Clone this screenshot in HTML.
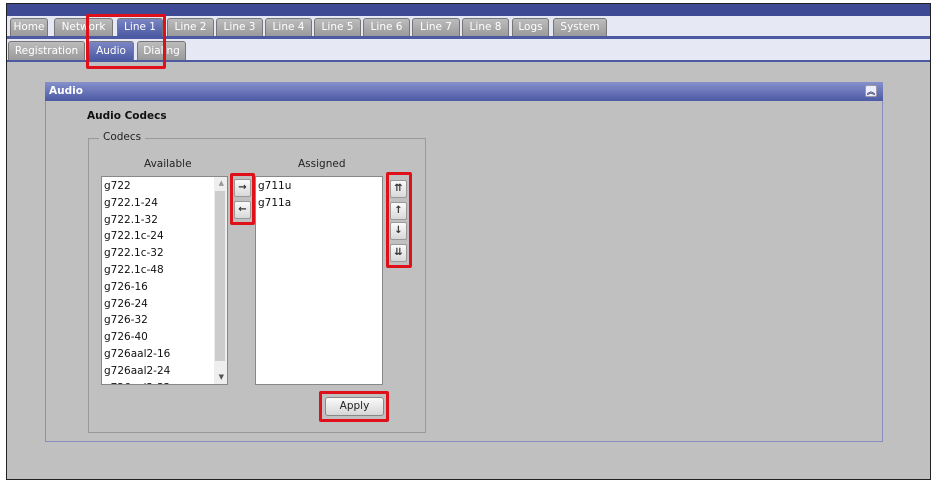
<!DOCTYPE html><html><head><style>
body{margin:0;width:937px;height:484px;background:#fff;font-family:"DejaVu Sans","Liberation Sans",sans-serif;font-size:10px;position:relative;overflow:hidden}
.a{position:absolute}
.tab{position:absolute;top:18px;height:18px;background:linear-gradient(#bcbcbc,#9a9a9a);border:1px solid #777;border-bottom:none;border-radius:3px 3px 0 0;color:#fff;line-height:17px;text-align:center;font-size:10.5px;box-sizing:border-box}
.st{position:absolute;top:41px;height:19px;background:linear-gradient(#bcbcbc,#9a9a9a);border:1px solid #777;border-bottom:none;border-radius:3px 3px 0 0;color:#fff;line-height:19px;text-align:center;font-size:10.5px;box-sizing:border-box}
.sel{background:linear-gradient(#7b86c4,#4c5aa4)}
.red{position:absolute;border:3px solid #e0101a;border-radius:2px;box-sizing:border-box}
.btn{position:absolute;width:17px;height:18px;background:linear-gradient(#fafafa,#d8d8d8);border:1px solid #999;border-radius:2px;box-sizing:border-box;font-size:10px;font-weight:bold;line-height:16px;text-align:center;color:#333}
.list{position:absolute;background:#fff;border:1px solid #888;box-sizing:border-box;overflow:hidden}
.list div{height:16.8px;line-height:16.8px;padding-left:2px;font-size:10.5px;color:#111}
</style></head><body>
<div class="a" style="left:6px;top:3px;width:925px;height:477px;border:1px solid #222;background:#c0c0c0;box-sizing:border-box"></div>
<div class="a" style="left:7px;top:4px;width:923px;height:12px;background:#3e4a94"></div>
<div class="a" style="left:7px;top:16px;width:923px;height:20px;background:#e6e8f4"></div>
<div class="a" style="left:7px;top:36px;width:923px;height:3px;background:#4c5aa4"></div>
<div class="a" style="left:7px;top:39px;width:923px;height:21px;background:#e6e8f4"></div>
<div class="a" style="left:7px;top:60px;width:923px;height:2px;background:#4c5aa4"></div>
<div class="tab" style="left:10px;width:38px">Home</div>
<div class="tab" style="left:54px;width:59px">Network</div>
<div class="tab sel" style="left:117px;width:46px">Line 1</div>
<div class="tab" style="left:167px;width:47px">Line 2</div>
<div class="tab" style="left:216px;width:47px">Line 3</div>
<div class="tab" style="left:265px;width:47px">Line 4</div>
<div class="tab" style="left:314px;width:47px">Line 5</div>
<div class="tab" style="left:363px;width:47px">Line 6</div>
<div class="tab" style="left:412px;width:48px">Line 7</div>
<div class="tab" style="left:462px;width:47px">Line 8</div>
<div class="tab" style="left:512px;width:37px">Logs</div>
<div class="tab" style="left:553px;width:54px">System</div>
<div class="st" style="left:8px;width:77px">Registration</div>
<div class="st sel" style="left:88px;width:46px">Audio</div>
<div class="st" style="left:137px;width:49px">Dialing</div>
<div class="red" style="left:86px;top:14px;width:80px;height:55px"></div>
<div class="a" style="left:45px;top:82px;width:838px;height:360px;border:1px solid #8890c0;box-sizing:border-box"></div>
<div class="a" style="left:45px;top:82px;width:838px;height:19px;background:linear-gradient(#8590cc,#4c5aa4);color:#fff;font-weight:bold;font-size:10.5px;line-height:19px;padding-left:4px;box-sizing:border-box">Audio</div>
<div class="a" style="left:865px;top:85px;width:12px;height:12px;background:#eef;border:1px solid #99a;border-radius:2px;box-sizing:border-box;font-size:8px;line-height:11px;text-align:center;color:#336;font-weight:bold">︽</div>
<div class="a" style="left:87px;top:110px;font-weight:bold;font-size:10.5px;color:#111">Audio Codecs</div>
<div class="a" style="left:88px;top:138px;width:338px;height:295px;border:1px solid #999;box-sizing:border-box"></div>
<div class="a" style="left:99px;top:131px;background:#c0c0c0;padding:0 4px;font-size:10.5px;color:#222">Codecs</div>
<div class="a" style="left:144px;top:158px;font-size:10.5px;color:#222">Available</div>
<div class="a" style="left:298px;top:158px;font-size:10.5px;color:#222">Assigned</div>
<div class="list" style="left:101px;top:176px;width:127px;height:209px;padding-top:1px">
<div>g722</div><div>g722.1-24</div><div>g722.1-32</div><div>g722.1c-24</div><div>g722.1c-32</div><div>g722.1c-48</div><div>g726-16</div><div>g726-24</div><div>g726-32</div><div>g726-40</div><div>g726aal2-16</div><div>g726aal2-24</div><div>g726aal2-32</div>
<span class="a" style="right:0;top:0;width:13px;height:207px;background:#eee"></span>
<span class="a" style="right:2px;top:14px;width:10px;height:170px;background:#ccc"></span>
<span class="a" style="right:3px;top:2px;font-size:7px;color:#999">▲</span>
<span class="a" style="right:3px;bottom:3px;font-size:7px;color:#555">▼</span>
</div>
<div class="list" style="left:255px;top:176px;width:128px;height:209px;padding-top:1px"><div>g711u</div><div>g711a</div></div>
<div class="btn" style="left:234px;top:179px">→</div>
<div class="btn" style="left:234px;top:201px">←</div>
<div class="red" style="left:230px;top:173px;width:25px;height:52px"></div>
<div class="btn" style="left:390px;top:180px">⇈</div>
<div class="btn" style="left:390px;top:202px">↑</div>
<div class="btn" style="left:390px;top:222px">↓</div>
<div class="btn" style="left:390px;top:244px">⇊</div>
<div class="red" style="left:386px;top:172px;width:26px;height:96px"></div>
<div class="a" style="left:325px;top:397px;width:59px;height:19px;background:linear-gradient(#fafafa,#d6d6d6);border:1px solid #888;border-radius:3px;box-sizing:border-box;font-size:10.5px;line-height:17px;text-align:center;color:#222">Apply</div>
<div class="red" style="left:319px;top:391px;width:70px;height:31px"></div>
</body></html>
